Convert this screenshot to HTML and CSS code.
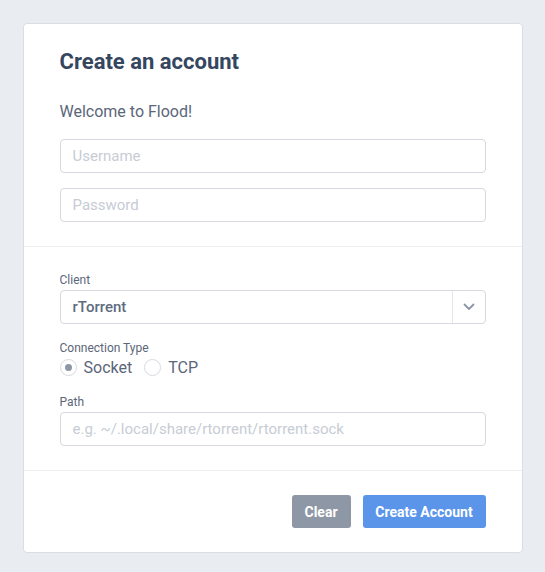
FILE: index.html
```html
<!DOCTYPE html>
<html>
<head>
<meta charset="utf-8">
<link rel="stylesheet" href="styles.css">
</head>
<body>
<div class="card">
  <div class="section first">
    <h1 class="title">Create an account</h1>
    <p class="welcome">Welcome to Flood!</p>
    <input class="field" type="text" placeholder="Username">
    <input class="field" type="password" placeholder="Password">
  </div>
  <div class="section second">
    <label class="label">Client</label>
    <div class="select">
      <span class="select-value">rTorrent</span>
      <span class="select-arrow">
        <svg width="12" height="8" viewBox="0 0 12 8"><path d="M1.5 1.5 L6 6 L10.5 1.5" fill="none" stroke="#8c97a7" stroke-width="1.8" stroke-linecap="round" stroke-linejoin="round"/></svg>
      </span>
    </div>
    <label class="label gap">Connection Type</label>
    <div class="radios">
      <span class="radio"><span class="circle checked"></span>Socket</span>
      <span class="radio"><span class="circle"></span>TCP</span>
    </div>
    <label class="label gap2">Path</label>
    <input class="field" type="text" placeholder="e.g. ~/.local/share/rtorrent/rtorrent.sock">
  </div>
  <div class="section footer">
    <button class="btn clear">Clear</button>
    <button class="btn primary">Create Account</button>
  </div>
</div>
</body>
</html>
```
FILE: styles.css
```css
* { box-sizing: border-box; }
html, body { margin: 0; padding: 0; }
body {
  background: #e9ecf1;
  font-family: Roboto, "Liberation Sans", sans-serif;
  padding-top: 23px;
}
.card {
  width: 500px;
  margin: 0 auto;
  background: #fff;
  border: 1px solid #d9dde4;
  border-radius: 4px;
  height: 530px;
}
.section {
  padding: 24px 36px 24px 36px;
  border-bottom: 1px solid #eceef2;
  display: flex;
  flex-direction: column;
}
.section.second { padding-top: 26px; }
.title {
  margin: 0;
  font-size: 22px;
  line-height: 28px;
  font-weight: 700;
  color: #35465f;
}
.welcome {
  margin: 25px 0 16px 0;
  font-size: 16px;
  line-height: 22px;
  color: #5b6679;
}
.field {
  display: block;
  width: 100%;
  height: 34px;
  border: 1px solid #d6d9df;
  border-radius: 4px;
  padding: 0 12px;
  font-family: Roboto, "Liberation Sans", sans-serif;
  font-size: 15px;
  color: #5b6679;
  background: #fff;
}
.field + .field { margin-top: 15px; }
.field::placeholder { color: #c7ccd5; }
.label {
  font-size: 12px;
  line-height: 14px;
  color: #5b6679;
  margin-bottom: 3px;
}
.label.gap { margin-top: 17px; margin-bottom: 1px; }
.label.gap2 { margin-top: 17px; }
.select {
  display: flex;
  height: 34px;
  border: 1px solid #d6d9df;
  border-radius: 4px;
  align-items: stretch;
}
.select-value {
  flex: 1;
  display: flex;
  align-items: center;
  padding-left: 12px;
  font-size: 15px;
  font-weight: 500;
  color: #5e6b7f;
}
.select-arrow {
  width: 33px;
  border-left: 1px solid #e3e6ea;
  display: flex;
  align-items: center;
  justify-content: center;
}
.radios {
  display: flex;
  gap: 12px;
  height: 22px;
  align-items: center;
}
.radio {
  display: flex;
  align-items: center;
  gap: 7px;
  font-size: 16px;
  color: #5b6679;
}
.circle {
  width: 17px;
  height: 17px;
  border: 1px solid #d6d9df;
  border-radius: 50%;
  display: flex;
  align-items: center;
  justify-content: center;
}
.circle.checked::after {
  content: "";
  width: 7px;
  height: 7px;
  border-radius: 50%;
  background: #8c97a7;
}
.footer {
  flex-direction: row;
  justify-content: flex-end;
  gap: 12px;
  border-bottom: none;
}
.btn {
  height: 33px;
  border: none;
  border-radius: 3px;
  color: #fff;
  font-family: Roboto, "Liberation Sans", sans-serif;
  font-size: 14px;
  font-weight: 700;
  padding: 0;
}
.btn.clear { background: #8d97a5; width: 59px; }
.btn.primary { background: #5b95ea; width: 123px; }
```
